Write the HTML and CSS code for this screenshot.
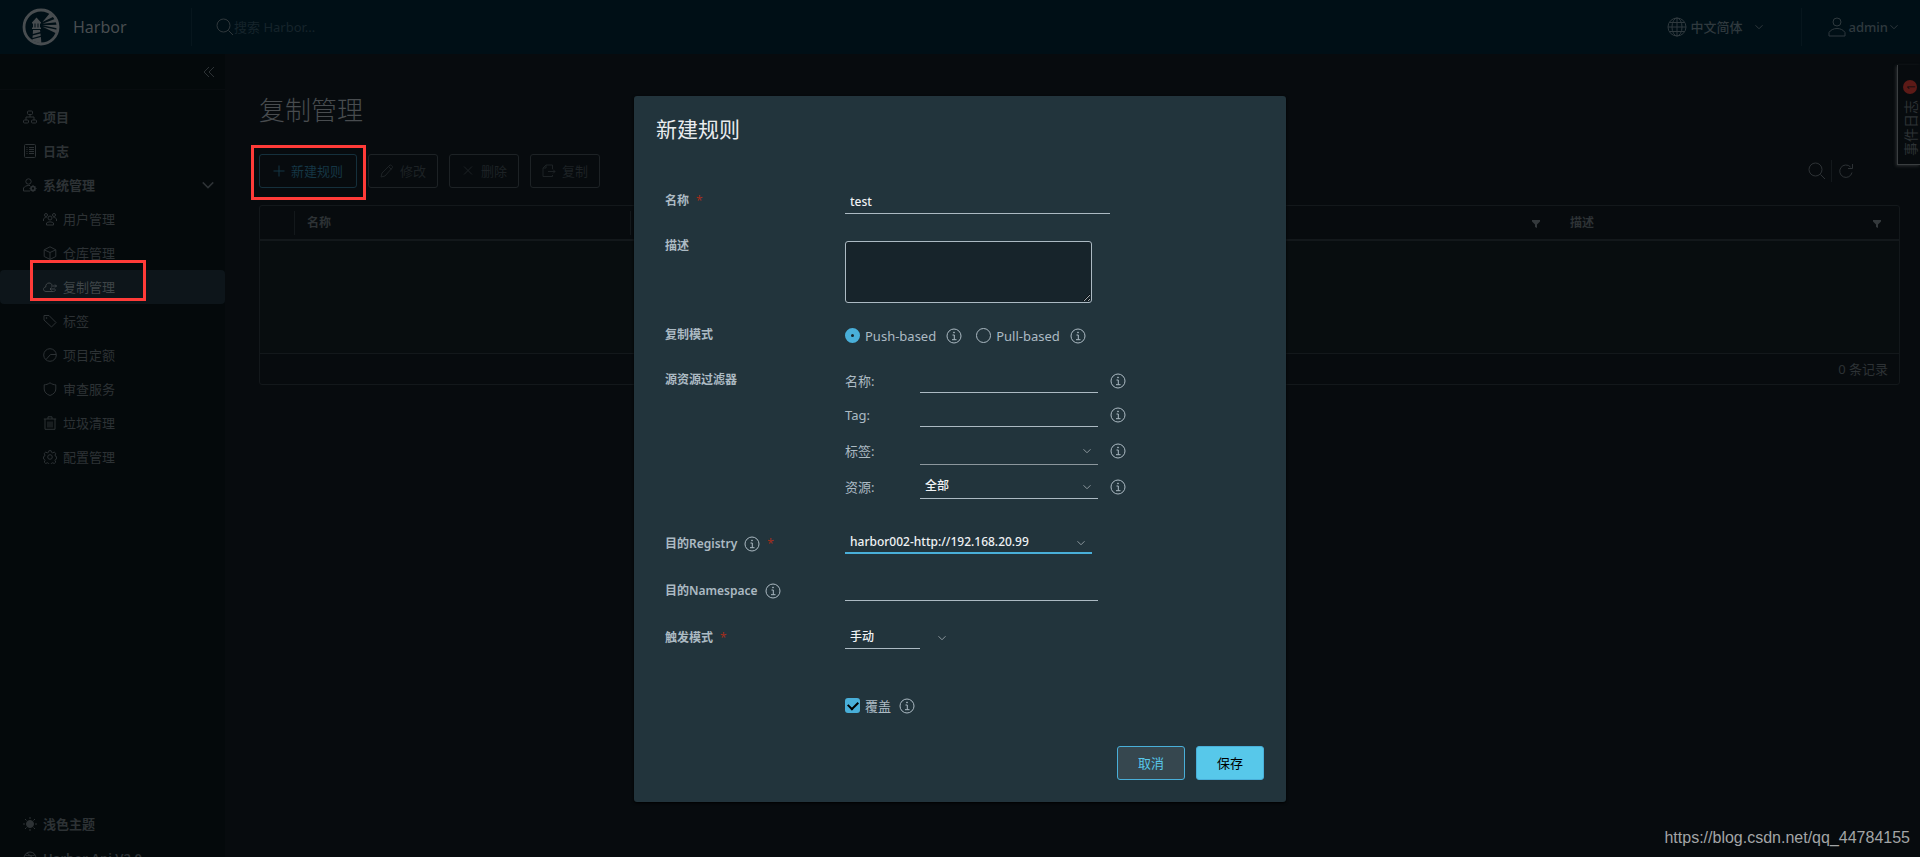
FILE: index.html
```html
<!DOCTYPE html>
<html lang="zh-CN">
<head>
<meta charset="utf-8">
<title>Harbor</title>
<link rel="stylesheet" href="styles.css">
</head>
<body>
<svg class="sprite" aria-hidden="true">
  <symbol id="i-info" viewBox="0 0 16 16"><circle cx="8" cy="8" r="7"/><path d="M6.500 7H8.300V11.500M6 11.700h4.500"/><circle cx="8" cy="4.500" r=".5"/></symbol>
  <symbol id="i-down" viewBox="0 0 16 16"><path d="M1 4.500l7 7 7-7"/></symbol>
  <symbol id="i-search" viewBox="0 0 18 18"><circle cx="7.500" cy="7.500" r="6.500"/><path d="M12.500 12.500L17 17"/></symbol>
  <symbol id="i-filter" viewBox="0 0 10 10"><path d="M1 1h8v1.500L6 5.500V9L4 8V5.500L1 2.500z"/></symbol>
</svg>

<header class="topbar">
  <a class="brand" href="#">
    <svg class="logo" viewBox="0 0 38 38" aria-hidden="true">
      <circle cx="19" cy="19" r="17" fill="none" stroke="currentColor" stroke-width="2.800"/>
      <path fill="currentColor" d="M10 14.500l4.500-5 4.500 5v1h-1v4h1v1.500h-9V19.500h1v-4h-1zM12.500 15.500v4h1v-4zM15.500 15.500v4h1v-4zM11 22h7l.300 2-7.500 2zM10.700 27.500l7.800-2 .2 2.200-8.200 2.200zM10.300 31.300l8.600-2.300.5 6.500-9-2.500z"/>
      <path fill="currentColor" d="M20.500 14L28 5l4 3.500zM20.500 15.800l13-5 1 3.500zM20.500 17.200l14.500-.5v3.500zM20.500 18.800l14.500 3-1 3.500z"/>
    </svg>
    <span>Harbor</span>
  </a>
  <label class="search">
    <svg class="ico ico-18"><use href="#i-search"/></svg>
    <input type="search" placeholder="搜索 Harbor..." aria-label="搜索 Harbor">
  </label>
  <button class="top-btn lang" type="button">
    <svg class="ico ico-20" viewBox="0 0 20 20"><circle cx="10" cy="10" r="9"/><ellipse cx="10" cy="10" rx="5" ry="9"/><path d="M10 1v18M1 10h18M2.500 5.500h15M2.500 14.500h15"/></svg>
    <span>中文简体</span>
    <svg class="ico ico-8 chev"><use href="#i-down"/></svg>
  </button>
  <button class="top-btn user" type="button">
    <svg class="ico ico-20" viewBox="0 0 20 20"><circle cx="10" cy="5" r="4"/><path d="M2 19v-3.500c1.500-2.500 4.500-4 8-4s6.500 1.500 8 4V19z"/></svg>
    <span>admin</span>
    <svg class="ico ico-8 chev"><use href="#i-down"/></svg>
  </button>
</header>

<div class="shell">
  <nav class="side">
    <div class="side-top"><button class="collapse" type="button" aria-label="收起">
      <svg class="ico ico-12" viewBox="0 0 12 12"><path d="M6 1L1 6l5 5M11 1L6 6l5 5"/></svg></button></div>
    <div class="nav">
      <a class="item" href="#"><svg class="ico ico-14" viewBox="0 0 14 14"><rect x="4.500" y="1" width="5" height="3.500" rx="1"/><rect x=".5" y="10" width="5" height="3" rx="1"/><rect x="8.500" y="10" width="5" height="3" rx="1"/><path d="M7 4.500V7M3 10V7h8v3"/></svg>项目</a>
      <a class="item" href="#"><svg class="ico ico-14" viewBox="0 0 14 14"><rect x="1.500" y=".5" width="11" height="13" rx="1"/><path d="M3.500 3.500h1M6 3.500h5M3.500 5.500h1M6 5.500h5M3.500 7.500h1M6 7.500h5M3.500 9.500h1M6 9.500h5"/></svg>日志</a>
      <a class="item" href="#"><svg class="ico ico-14" viewBox="0 0 14 14"><circle cx="5.500" cy="3.500" r="2.700"/><path d="M7 13H.500v-3c1-1.500 3-2.500 5-2.500h1.500"/><circle cx="10" cy="10.500" r="2" stroke-width="1.700"/><path d="M10 7v1M10 13v1M6.500 10.500h1M12.500 10.500h1M7.600 8.100l.7.7M11.700 12.200l.7.7M7.600 12.900l.7-.7M11.700 8.800l.7-.7"/></svg>系统管理<svg class="ico ico-12 caret"><use href="#i-down"/></svg></a>
      <a class="item sub" href="#"><svg class="ico ico-14" viewBox="0 0 14 14"><circle cx="7" cy="6" r="2"/><circle cx="3" cy="3" r="1.500"/><circle cx="11" cy="3" r="1.500"/><path d="M3.500 13v-2c1-1.500 6-1.500 7 0v2zM.500 9V7c.5-1 1.500-1.500 3-1.500M13.500 9V7c-.5-1-1.500-1.500-3-1.500"/></svg>用户管理</a>
      <a class="item sub" href="#"><svg class="ico ico-14" viewBox="0 0 14 14"><path d="M7 .8l5.800 3v6.700L7 13.400 1.200 10.500V3.800zM1.200 3.800L7 6.500l5.800-2.700M7 6.500v7"/></svg>仓库管理</a>
      <a class="item sub active" href="#"><svg class="ico ico-14" viewBox="0 0 14 14"><path d="M12.500 9.500c0 1.300-1 2-2 2H3c-1.500 0-2.500-1-2.500-2.200S1.500 7 2.700 7C2.700 4.500 4 3 6 3c1.500 0 2.500.7 3 1.800M8 6h5.500M12 4.500L13.500 6 12 7.500M12 9H7M8.500 7.500L7 9l1.500 1.500"/></svg>复制管理</a>
      <a class="item sub" href="#"><svg class="ico ico-14" viewBox="0 0 14 14"><path d="M1 1.500h5l7 7-4.500 4.500L1 6z"/><circle cx="3.500" cy="4" r=".5"/></svg>标签</a>
      <a class="item sub" href="#"><svg class="ico ico-14" viewBox="0 0 14 14"><circle cx="7" cy="7" r="6.300"/><path d="M13 6.500H7.500L3 11.500"/></svg>项目定额</a>
      <a class="item sub" href="#"><svg class="ico ico-14" viewBox="0 0 14 14"><path d="M7 .8c2 1.400 4 2 5.800 2V7c0 3-2.300 5.300-5.800 6.500C3.500 12.300 1.200 10 1.200 7V2.800c1.800 0 3.800-.6 5.800-2z"/></svg>审查服务</a>
      <a class="item sub" href="#"><svg class="ico ico-14" viewBox="0 0 14 14"><path d="M.8 3h12.400M2 3v10.300h10V3M5 3V.800h4V3M5 5.500v6M7 5.500v6M9 5.500v6"/></svg>垃圾清理</a>
      <a class="item sub" href="#"><svg class="ico ico-14" viewBox="0 0 14 14"><circle cx="7" cy="7" r="2.300"/><path d="M5.900.7h2.200l.4 1.600 1.300.6 1.400-.9 1.600 1.600-.8 1.400.5 1.300 1.100.4v2.200l-1.100.4-.5 1.300.8 1.400-1.600 1.600-1.400-.9-1.300.6-.4 1.100H5.900l-.4-1.100-1.300-.6-1.400.9L1.200 12l.8-1.400-.5-1.300-1-.4V6.700l1-.4.500-1.300-.8-1.400L2.800 2l1.400.9 1.300-.6z"/></svg>配置管理</a>
    </div>
    <div class="nav-foot">
      <a class="item" href="#"><svg class="ico ico-14" viewBox="0 0 14 14"><circle cx="7" cy="7" r="3.500" fill="currentColor"/><path d="M7 0v2M7 12v2M0 7h2M12 7h2M2 2l1.500 1.500M10.500 10.500L12 12M2 12l1.500-1.500M10.500 3.500L12 2"/></svg>浅色主题</a>
      <a class="item" href="#"><svg class="ico ico-14" viewBox="0 0 14 14"><circle cx="7" cy="7" r="6"/><path d="M2 4c3 1 7 1 10 0M4 2l6 5"/></svg>Harbor Api V2.0</a>
    </div>
  </nav>

  <main class="main">
    <h1>复制管理</h1>
    <div class="tools">
      <button class="btn primary" type="button"><svg class="ico ico-12" viewBox="0 0 12 12"><path d="M6 .5v11M.5 6h11"/></svg>新建规则</button>
      <button class="btn" type="button" disabled><svg class="ico ico-14" viewBox="0 0 14 14"><path d="M1 13l1-4L10 1c.7-.5 3 1.500 2.500 2.500L5 12zM8.500 2.500L11.500 5.500"/></svg>修改</button>
      <button class="btn" type="button" disabled><svg class="ico ico-14" viewBox="0 0 14 14"><path d="M3 2.500l8 8M11 2.500l-8 8"/></svg>删除</button>
      <button class="btn" type="button" disabled><svg class="ico ico-14" viewBox="0 0 14 14"><path d="M10.500 5V1H4L1 4v8.500h9.500V11M4 1v3H1M6 7.500h7M11 5.500l2 2-2 2"/></svg>复制</button>
      <div class="table-tools">
        <button class="icon-btn" type="button" aria-label="搜索"><svg class="ico ico-18"><use href="#i-search"/></svg></button>
        <button class="icon-btn split" type="button" aria-label="刷新"><svg class="ico ico-16" viewBox="0 0 16 16"><path d="M14 9.500A6.200 6.200 0 1 1 12.500 4M14.500 1v4.500H10"/></svg></button>
      </div>
    </div>
    <table class="grid">
      <colgroup><col class="c-check"><col class="c-name"><col><col class="c-desc"></colgroup>
      <thead><tr>
        <th></th><th>名称</th>
        <th>&nbsp;<svg class="filter"><use href="#i-filter"/></svg></th>
        <th>描述<svg class="filter"><use href="#i-filter"/></svg></th>
      </tr></thead>
      <tbody><tr><td colspan="4"></td></tr></tbody>
      <tfoot><tr><td colspan="4">0 条记录</td></tr></tfoot>
    </table>
  </main>
</div>

<button class="events" type="button"><span>事件日志</span><span class="badge">1</span></button>

<div class="mark mark-new"></div>
<div class="mark mark-nav"></div>

<div class="modal-layer">
  <form class="modal" role="dialog" aria-labelledby="dlg-title">
    <h2 id="dlg-title">新建规则</h2>
    <div class="fields">
      <div class="field">
        <label class="name" for="f-name">名称 <span class="req">*</span></label>
        <input class="line w-name" id="f-name" type="text" value="test">
      </div>
      <div class="field">
        <label class="name" for="f-desc">描述</label>
        <textarea id="f-desc"></textarea>
      </div>
      <div class="field">
        <span class="name">复制模式</span>
        <div class="options">
          <label class="opt"><input class="radio" type="radio" name="mode" checked>Push-based</label>
          <svg class="ico info"><use href="#i-info"/></svg>
          <label class="opt"><input class="radio" type="radio" name="mode">Pull-based</label>
          <svg class="ico info"><use href="#i-info"/></svg>
        </div>
      </div>
      <div class="field filters-field">
        <span class="name">源资源过滤器</span>
        <div class="filters">
          <label for="r-name">名称:</label><input class="line" id="r-name" type="text"><svg class="ico info"><use href="#i-info"/></svg>
          <label for="r-tag">Tag:</label><input class="line" id="r-tag" type="text"><svg class="ico info"><use href="#i-info"/></svg>
          <label for="r-label">标签:</label><div class="pick tall"><select class="line" id="r-label"><option></option></select><svg class="ico ico-8"><use href="#i-down"/></svg></div><svg class="ico info"><use href="#i-info"/></svg>
          <label for="r-res">资源:</label><div class="pick"><select class="line" id="r-res"><option>全部</option></select><svg class="ico ico-8"><use href="#i-down"/></svg></div><svg class="ico info"><use href="#i-info"/></svg>
        </div>
      </div>
      <div class="field roomy">
        <label class="name" for="f-reg">目的Registry <svg class="ico info"><use href="#i-info"/></svg> <span class="req">*</span></label>
        <div class="pick w-reg"><select class="line focus" id="f-reg"><option>harbor002-http://192.168.20.99</option></select><svg class="ico ico-8"><use href="#i-down"/></svg></div>
      </div>
      <div class="field roomy">
        <label class="name" for="f-ns">目的Namespace <svg class="ico info"><use href="#i-info"/></svg></label>
        <input class="line w-ns" id="f-ns" type="text">
      </div>
      <div class="field trigger">
        <label class="name" for="f-trig">触发模式 <span class="req">*</span></label>
        <div class="pick-out"><select class="line" id="f-trig"><option>手动</option></select><svg class="ico ico-8"><use href="#i-down"/></svg></div>
      </div>
      <div class="field">
        <span></span>
        <div class="options">
          <label class="opt"><input class="check" type="checkbox" checked>覆盖</label>
          <svg class="ico info near"><use href="#i-info"/></svg>
        </div>
      </div>
    </div>
    <div class="actions">
      <button class="act" type="button">取消</button>
      <button class="act save" type="submit">保存</button>
    </div>
  </form>
</div>
<div class="watermark">https://blog.csdn.net/qq_44784155</div>
</body>
</html>
```

FILE: styles.css
```css
* { box-sizing: border-box; }
body {
  margin: 0;
  height: 100vh;
  overflow: hidden;
  display: flex;
  flex-direction: column;
  background: #070b0e;
  color: #2d3235;
  font: 13px/24px "Noto Sans", "Noto Sans CJK SC", sans-serif;
}
button, input, select, textarea { font: inherit; color: inherit; }
button { background: none; border: 0; padding: 0; }
a { color: inherit; text-decoration: none; }
.sprite { display: none; }
.ico { fill: none; stroke: currentColor; stroke-width: 1; flex: none; }
.ico-8 { width: 8px; height: 8px; stroke-width: 2; }
.ico-12 { width: 12px; height: 12px; }
.ico-14 { width: 14px; height: 14px; }
.ico-16 { width: 16px; height: 16px; }
.ico-18 { width: 18px; height: 18px; }
.ico-20 { width: 20px; height: 20px; }

/* top bar */
.topbar { display: flex; align-items: center; height: 54px; flex: none; background: #000f16; }
.brand { display: flex; align-items: center; gap: 13px; width: 191px; padding-left: 22px; font-size: 16px; color: #484d50; }
.logo { width: 38px; height: 38px; }
.search { flex: 1; display: flex; align-items: center; height: 38px; padding-left: 24px; border-left: 1px solid #07161d; color: #30383c; }
.search input { background: none; border: 0; outline: 0; padding: 0; flex: 1; }
.search input::placeholder { color: #16242b; opacity: 1; }
.top-btn { display: flex; align-items: center; height: 38px; font-weight: 500; color: #2f393e; }
.lang { gap: 4px; padding-right: 38px; }
.lang .chev { margin-left: 8px; }
.user { gap: 2px; padding: 0 22px 0 25px; border-left: 1px solid #07161d; }

/* side navigation */
.shell { display: flex; flex: 1; min-height: 0; }
.side { display: flex; flex-direction: column; width: 225px; flex: none; background: #04090b; }
.side-top { display: flex; justify-content: flex-end; align-items: center; height: 36px; padding-right: 10px; border-bottom: 1px solid #080c0f; }
.collapse { display: flex; }
.nav { padding-top: 10px; }
.item { display: flex; align-items: center; gap: 6px; height: 34px; padding: 0 11px 0 23px; font-weight: 600; }
.sub { padding-left: 43px; font-weight: 400; }
.active { background: #0d151a; border-radius: 4px; color: #3f4548; }
.caret { margin-left: auto; stroke-width: 2; }
.nav-foot { margin: auto 0 -18px; }

/* main area */
.main { flex: 1; min-width: 0; padding: 38px 20px 0 34px; }
.main h1 { margin: 0; font-size: 26px; line-height: 36px; font-weight: 300; color: #484c4f; }
.tools { display: flex; align-items: center; gap: 11px; margin: 26px 0 17px; }
.btn { display: flex; align-items: center; gap: 6px; height: 34px; padding: 0 11px; border: 1px solid #1d2225; border-radius: 3px; color: #1d2225; }
.btn.primary { padding: 0 13px; border-color: #15303c; color: #153644; }
.table-tools { display: flex; align-items: center; margin-left: auto; padding-right: 46px; }
.icon-btn { display: flex; align-items: center; height: 22px; }
.split { margin-left: 5px; padding-left: 6px; border-left: 1px solid #14191c; }
.grid { width: 100%; table-layout: fixed; border-collapse: separate; border-spacing: 0; border: 1px solid #13181b; border-radius: 3px; }
.c-check { width: 35px; }
.c-name { width: 336px; }
.c-desc { width: 341px; }
.grid th { height: 35px; padding: 0 17px 0 12px; border-bottom: 2px solid #13181b; text-align: left; font-size: 12px; font-weight: 600; line-height: 24px;
  background: linear-gradient(#13181b, #13181b) right center / 1px 24px no-repeat; }
.grid th:nth-child(n+3) { background: none; }
.filter { float: right; width: 10px; height: 10px; margin-top: 8px; fill: #34393c; }
.grid tbody td { height: 112px; background: #080d0f; }
.grid tfoot td { height: 31px; padding: 0 11px; border-top: 1px solid #13181b; text-align: right; }

.events { position: absolute; top: 65px; right: 0; display: flex; align-items: center; gap: 6px; width: 23px; height: 100px; padding: 8px 3px 8px 0;
  border: solid #3a3e40; border-width: 1px 1px 0 0; box-shadow: 1px -1px 3px #2a2e30; background: #070b0e;
  writing-mode: vertical-rl; text-orientation: sideways; transform: rotate(180deg); font-size: 14px; line-height: 16px; }
.badge { width: 14px; height: 14px; border-radius: 7px; background: #5c1a17; color: #070b0e; font-size: 10px; line-height: 14px; text-align: center; }

/* annotation frames */
.mark { position: absolute; border: 3px solid #ff3b38; }
.mark-new { left: 251px; top: 145px; width: 115px; height: 55px; }
.mark-nav { left: 30px; top: 260px; width: 116px; height: 41px; }

/* dialog */
.modal-layer { position: absolute; inset: 0; display: flex; justify-content: center; align-items: flex-start; padding-top: 96px; }
.modal { width: 652px; padding: 17px 22px 22px; border-radius: 3px; background: #22343c; box-shadow: 0 1px 3px #000; color: #acbac3; }
.modal h2 { margin: 0 0 44px; font-size: 21px; line-height: 32px; font-weight: 400; color: #e9ecef; }
.fields { padding-left: 9px; }
.field { display: grid; grid-template-columns: 180px 1fr; align-items: start; margin-bottom: 20px; }
.name { display: flex; align-items: center; gap: 7px; font-size: 12px; font-weight: 600; }
.req { color: #a32e1c; font-weight: 400; }
.line { height: 25px; width: 100%; padding: 0 5px; border: 0; border-bottom: 1px solid #acbac3; border-radius: 0; outline: 0; background: none; appearance: none; color: #f0f2f4; font-size: 12px; font-weight: 500; line-height: 20px; }
.w-name { width: 265px; }
.w-reg { width: 247px; }
.w-ns { width: 253px; height: 22px; }
.focus { height: 22px; border-bottom: 2px solid #49afd9; }
textarea { width: 247px; height: 62px; margin-top: 7px; border: 1px solid #acbac3; border-radius: 3px; background: #17242b; outline: 0; }
.options { display: flex; align-items: center; height: 25px; }
.opt { display: flex; align-items: center; gap: 5px; }
.info { width: 16px; height: 16px; stroke-width: 1; }
.options .info { margin: 0 14px 0 10px; }
.options .near { margin-left: 8px; }
.radio, .check { appearance: none; width: 15px; height: 15px; margin: 0; border: 1px solid #acbac3; border-radius: 50%; }
.radio:checked { border: 6px solid #49afd9; background: #17242b; }
.check { display: grid; place-items: center; border-radius: 3px; }
.check:checked { border: 0; background: #49afd9; }
.check:checked::before { content: ""; width: 8px; height: 5px; margin-bottom: 3px; border: solid #000; border-width: 0 0 2px 2px; transform: rotate(-45deg); }
.filters { display: grid; grid-template-columns: 75px 178px 28px; row-gap: 9px; align-items: center; }
.filters .info { margin-left: 12px; }
.filters-field { margin-bottom: 33px; }
.pick { display: grid; align-items: center; }
.pick > * { grid-area: 1 / 1; }
.pick .ico { justify-self: end; margin-right: 7px; color: #8c979d; }
.tall .line { height: 29px; border-color: #8c979d; }
.roomy { margin-bottom: 23px; }
.pick-out { display: flex; align-items: center; gap: 18px; color: #8c979d; }
.pick-out .line { width: 75px; height: 23px; }
.trigger { margin-bottom: 43px; }
.actions { display: flex; justify-content: flex-end; gap: 11px; margin-top: 28px; }
.act { width: 68px; height: 34px; border: 1px solid #49afd9; border-radius: 3px; background: #36474f; color: #57c8ea; }
.save { background: #57c8ea; color: #000; }

.watermark { position: absolute; right: 10px; bottom: 7px; font: 16px/24px "Liberation Sans", sans-serif; color: #a3a5a6; }
```
